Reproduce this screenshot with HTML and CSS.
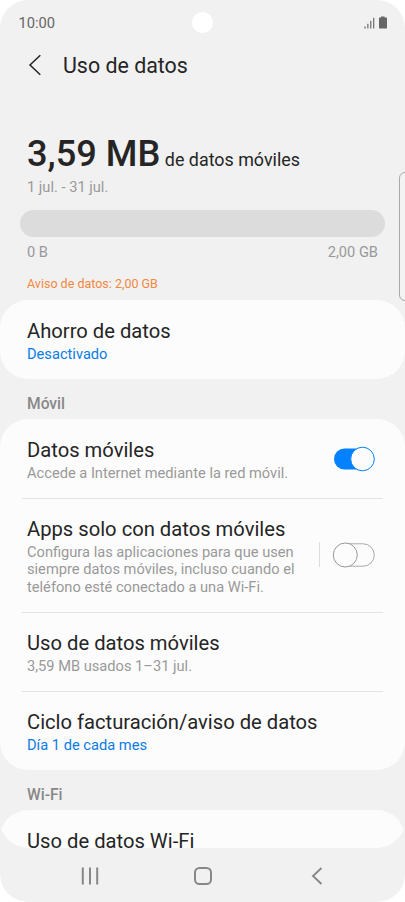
FILE: index.html
```html
<!DOCTYPE html>
<html lang="es">
<head>
<meta charset="utf-8">
<title>Uso de datos</title>
<link rel="stylesheet" href="styles.css">
</head>
<body>
<div class="screen">
  <header class="status">
    <span class="time">10:00</span>
    <svg class="status-icons" width="24" height="14" viewBox="0 0 24 14">
      <g fill="#777"><rect x="0.3" y="10.500" width="1.400" height="2"/><rect x="3.200" y="7.800" width="1.300" height="4.700"/><rect x="6.100" y="4.800" width="1.300" height="7.700"/><rect x="9" y="1.800" width="1.300" height="10.700"/></g>
      <path fill="#666" d="M17 .5h3.600v1h1.800q.6 0 .6.6v9.800q0 .6-.6.600h-6.800q-.6 0-.6-.6v-9.800q0-.6.6-.6h1.400z"/>
    </svg>
    <i class="camera"></i>
  </header>
  <div class="titlebar">
    <svg width="14" height="22" viewBox="0 0 14 22"><path d="M12.300 1.300L2 11l10.300 9.700" fill="none" stroke="#252525" stroke-width="1.500"/></svg>
    <h1>Uso de datos</h1>
  </div>
  <section class="usage">
    <p class="total"><b>3,59 MB</b><span>de datos móviles</span></p>
    <p class="period">1 jul. - 31 jul.</p>
    <div class="bar"></div>
    <p class="scale"><span>0 B</span><span>2,00 GB</span></p>
    <p class="warning">Aviso de datos: 2,00 GB</p>
  </section>
  <main class="list">
    <div class="card">
      <div class="row"><div><h2>Ahorro de datos</h2><p class="blue">Desactivado</p></div></div>
    </div>
    <h3>Móvil</h3>
    <div class="card">
      <div class="row">
        <div><h2>Datos móviles</h2><p>Accede a Internet mediante la red móvil.</p></div>
        <svg class="switch" width="44" height="26" viewBox="0 0 44 26"><rect x="2" y="2.500" width="36" height="21" rx="10.500" fill="#0381fe"/><circle cx="30.500" cy="13" r="11.800" fill="#fcfcfc" stroke="#0381fe"/></svg>
      </div>
      <div class="row tall">
        <div><h2>Apps solo con datos móviles</h2><p>Configura las aplicaciones para que usen<br>siempre datos móviles, incluso cuando el<br>teléfono esté conectado a una Wi-Fi.</p></div>
        <svg class="switch off" width="44" height="26" viewBox="0 0 44 26"><rect x="2" y="1.800" width="40.300" height="22.400" rx="11.200" fill="#fcfcfc" stroke="#aaa"/><circle cx="13.300" cy="13" r="12" fill="#fcfcfc" stroke="#999"/></svg>
      </div>
      <div class="row"><div><h2>Uso de datos móviles</h2><p>3,59 MB usados 1–31 jul.</p></div></div>
      <div class="row"><div><h2>Ciclo facturación/aviso de datos</h2><p class="blue">Día 1 de cada mes</p></div></div>
    </div>
    <h3>Wi-Fi</h3>
    <div class="card">
      <div class="row"><div><h2>Uso de datos Wi-Fi</h2></div></div>
    </div>
  </main>
  <nav>
    <svg width="18" height="18" viewBox="0 0 18 18"><path d="M1.800.5v17M9 .5v17M16.200.5v17" stroke="#888" stroke-width="2"/></svg>
    <svg class="home" width="20" height="20" viewBox="0 0 20 20"><rect x="2" y="2" width="16" height="16" rx="4.500" fill="none" stroke="#888" stroke-width="2"/></svg>
    <svg width="12" height="18" viewBox="0 0 12 18"><path d="M10.500 1L2 9l8.500 8" fill="none" stroke="#888" stroke-width="1.900"/></svg>
  </nav>
  <i class="edge"></i>
</div>
</body>
</html>
```
FILE: styles.css
```css
* { box-sizing: border-box; margin: 0; padding: 0; }
body { background: #fff; font-family: Roboto, sans-serif; color: #252525; }
.screen { position: relative; width: 405px; height: 902px; background: #f1f1f1; border-radius: 28px; overflow: hidden; display: flex; flex-direction: column; }
.status { position: relative; height: 44px; padding: 2px 17px 0 18.500px; display: flex; justify-content: space-between; align-items: center; }
.time { font-size: 14.700px; color: #666; }
.camera { position: absolute; left: 192px; top: 12px; width: 21px; height: 21px; border-radius: 50%; background: #fff; }
.titlebar { height: 42px; padding-left: 28px; display: flex; align-items: center; gap: 21px; }
h1 { font-size: 21.400px; font-weight: 400; }
.usage { height: 214px; padding: 44px 20px 0; }
.total { height: 48px; line-height: 48px; padding-left: 7px; display: flex; align-items: baseline; gap: 4.500px; }
.total b { font-size: 36.200px; font-weight: 500; }
.total span { font-size: 17.900px; }
.period { padding: 0 0 0 7px; font-size: 14.650px; line-height: 18px; color: #999; }
.bar { height: 27px; margin-top: 14px; border-radius: 14px; background: #dcdcdc; }
.scale { display: flex; justify-content: space-between; padding: 6px 7px 0 7px; font-size: 14.650px; line-height: 18px; color: #999; }
.warning { padding: 15px 0 0 7px; font-size: 12.500px; line-height: 15px; color: #f38840; }
.list { height: 548px; overflow: hidden; border-radius: 0 0 28px 28px; }
.card { background: #fcfcfc; border-radius: 28px; }
.row { position: relative; height: 79px; margin: 0 22px; padding: 18px 7px 0 5px; display: flex; justify-content: space-between; }
.row + .row { padding-top: 17px; border-top: 1px solid #e3e3e3; }
.row.tall { height: 114px; }
h2 { font-size: 20.200px; line-height: 27px; font-weight: 400; white-space: nowrap; }
.row p { margin-top: 1px; font-size: 14.650px; line-height: 17.400px; color: #999; white-space: nowrap; }
.row p.blue { color: #0b7be5; }
h3 { height: 40px; padding: 1px 0 0 27px; line-height: 49px; font-size: 15.600px; font-weight: 500; color: #888; }
.switch { flex: none; margin-top: 9px; }
.switch.off { margin-top: 26px; }
.tall::after { content: ""; position: absolute; left: 297px; top: 43px; width: 1px; height: 25px; background: #ddd; }
nav { height: 54px; padding: 2px 82px 0 81px; display: flex; justify-content: space-between; align-items: center; }
.home { margin-right: 4px; }
.edge { position: absolute; left: 399px; top: 172px; width: 12px; height: 129px; border: 1px solid #aaa; border-radius: 6px; background: #f3f3f3; }
```
